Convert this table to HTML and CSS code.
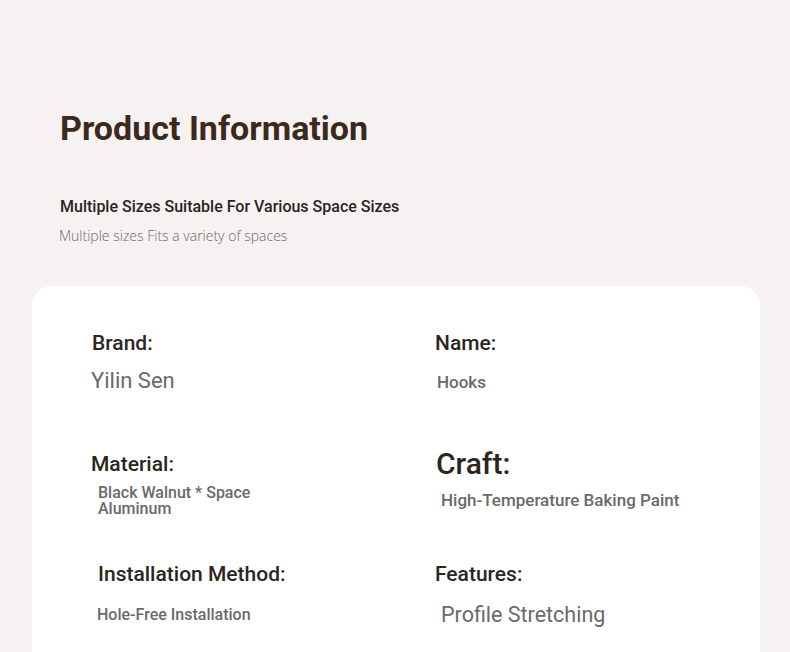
FILE: index.html
```html
<!DOCTYPE html>
<html lang="en">
<head>
<meta charset="utf-8">
<title>Product Information</title>
<link rel="stylesheet" href="styles.css">
</head>
<body>
<main class="page">
  <header class="header">
    <h1 class="title">Product Information</h1>
    <p class="subtitle">Multiple Sizes Suitable For Various Space Sizes</p>
    <p class="caption">Multiple sizes Fits a variety of spaces</p>
  </header>
  <section class="card">
    <div class="item">
      <div class="label shift1">Brand:</div>
      <div class="value large gap-l">Yilin Sen</div>
    </div>
    <div class="item">
      <div class="label">Name:</div>
      <div class="value medium gap-s shift2">Hooks</div>
    </div>
    <div class="item">
      <div class="label pad-top">Material:</div>
      <div class="value small tight indent">Black Walnut * Space Aluminum</div>
    </div>
    <div class="item">
      <div class="label craft shift1">Craft:</div>
      <div class="value medium gap-m indent-r">High-Temperature Baking Paint</div>
    </div>
    <div class="item">
      <div class="label indent">Installation Method:</div>
      <div class="value small gap-x indent-s">Hole-Free Installation</div>
    </div>
    <div class="item">
      <div class="label">Features:</div>
      <div class="value large profile indent-r">Profile Stretching</div>
    </div>
  </section>
</main>
</body>
</html>
```

FILE: styles.css
```css
* { box-sizing: border-box; }

html, body {
  margin: 0;
  padding: 0;
}

body {
  background: #f7f2f2;
  font-family: Roboto, "Liberation Sans", sans-serif;
  color: #2b2522;
}

.page {
  padding: 0 30px 0 32px;
}

.header {
  padding: 108px 0 0 28px;
}

.title {
  margin: 0;
  font-size: 34px;
  line-height: 40px;
  font-weight: 700;
  color: #3c291d;
}

.subtitle {
  margin: 49px 0 0;
  font-size: 16px;
  line-height: 20px;
  font-weight: 500;
  color: #2a2322;
}

.caption {
  margin: 9px 0 0 -1px;
  font-family: "Open Sans", "Noto Sans", sans-serif;
  font-size: 14px;
  line-height: 20px;
  font-weight: 300;
  color: #6c6868;
}

.card {
  margin-top: 40px;
  background: #ffffff;
  border-radius: 20px;
  padding: 43px 20px 60px 59px;
  display: grid;
  grid-template-columns: 344px 1fr;
  grid-template-rows: 118px 113px auto;
  align-items: start;
}

.label {
  font-size: 21px;
  line-height: 28px;
  font-weight: 500;
  color: #2b2522;
}

.label.craft {
  font-size: 30px;
  line-height: 34px;
  font-weight: 500;
}

.label.pad-top {
  padding-top: 3px;
}

.value {
  color: #6b6969;
}

.value.large {
  font-size: 22px;
  line-height: 28px;
  font-weight: 400;
}

.value.medium {
  font-size: 17px;
  line-height: 20px;
  font-weight: 500;
}

.value.small {
  font-size: 16px;
  line-height: 20px;
  font-weight: 500;
}

.value.tight {
  line-height: 16px;
  max-width: 200px;
  margin-top: 7px;
}

.value.profile {
  font-size: 21.5px;
  margin-top: 13px;
}

.gap-l { margin-top: 10px; }
.gap-m { margin-top: 9px; }
.gap-s { margin-top: 15px; }
.gap-x { margin-top: 17px; }

.shift1 { padding-left: 1px; }
.shift2 { padding-left: 2px; }
.indent { padding-left: 7px; }
.indent-s { padding-left: 6px; }
.indent-r { padding-left: 6px; }
```
